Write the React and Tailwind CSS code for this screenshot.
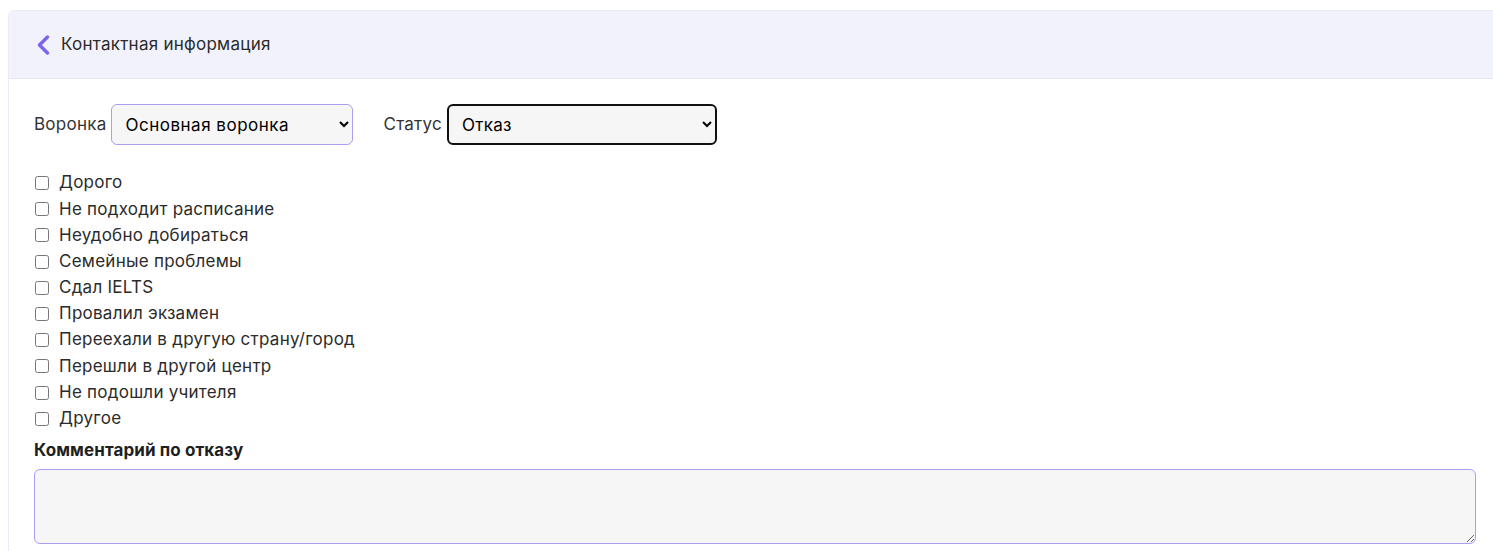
import React from 'react';

const reasons = [
  'Дорого',
  'Не подходит расписание',
  'Неудобно добираться',
  'Семейные проблемы',
  'Сдал IELTS',
  'Провалил экзамен',
  'Переехали в другую страну/город',
  'Перешли в другой центр',
  'Не подошли учителя',
  'Другое',
];

const App = () => {
  return (
    <div className="w-full h-[551px] overflow-hidden bg-white" style={{ fontFamily: 'Inter, "Noto Sans", sans-serif' }}>
      <div className="pt-[10px] pl-[8px]">
        <div className="w-[1493px] border border-[#ebebfa] rounded-tl-md">
          {/* Header */}
          <div className="h-[68px] bg-[#f2f2fc] border-b border-[#e6e6f8] flex items-center pl-[25px] gap-[8px]">
            <svg className="w-[19px] h-[24px]" viewBox="0 0 19 24" fill="none">
              <path d="M13.5 4L5.5 12l8 8" stroke="#7b63f0" strokeWidth="3.4" strokeLinecap="round" strokeLinejoin="round" />
            </svg>
            <span className="text-[17px] tracking-[0.25px] text-[#2b2b2b]">Контактная информация</span>
          </div>

          {/* Body */}
          <div className="pl-[25px] pr-[26px] pt-[25px] pb-6 text-[17px] tracking-[0.25px]">
            <div className="flex items-center">
              <label className="text-[#333] mr-[5px]">Воронка</label>
              <select
                className="w-[242px] h-[41px] bg-[#f6f6f6] border border-[#a99ff2] rounded-md pl-[9px] pr-[9px] text-black tracking-[0.5px]"
                defaultValue="main"
              >
                <option value="main">Основная воронка</option>
              </select>
              <label className="text-[#333] ml-[30px] mr-[5px]">Статус</label>
              <select
                className="w-[270px] h-[41px] bg-[#f6f6f6] border-2 border-[#111] rounded-md pl-[9px] pr-[10px] text-black"
                defaultValue="refuse"
              >
                <option value="refuse">Отказ</option>
              </select>
            </div>

            <div className="mt-[25px] flex flex-col">
              {reasons.map((r) => (
                <label key={r} className="flex items-center h-[26.2px] text-[#2b2b2b]">
                  <input type="checkbox" className="w-[14px] h-[14px] ml-[1px] mr-[10px]" />
                  <span>{r}</span>
                </label>
              ))}
            </div>

            <div className="mt-[6px] font-bold text-[#1f1f1f] tracking-[0.1px]">Комментарий по отказу</div>
            <textarea className="mt-[6px] w-[1442px] h-[75px] bg-[#f6f6f6] border border-[#a99ff2] rounded-md block" />
          </div>
        </div>
      </div>
    </div>
  );
};

export default App;
